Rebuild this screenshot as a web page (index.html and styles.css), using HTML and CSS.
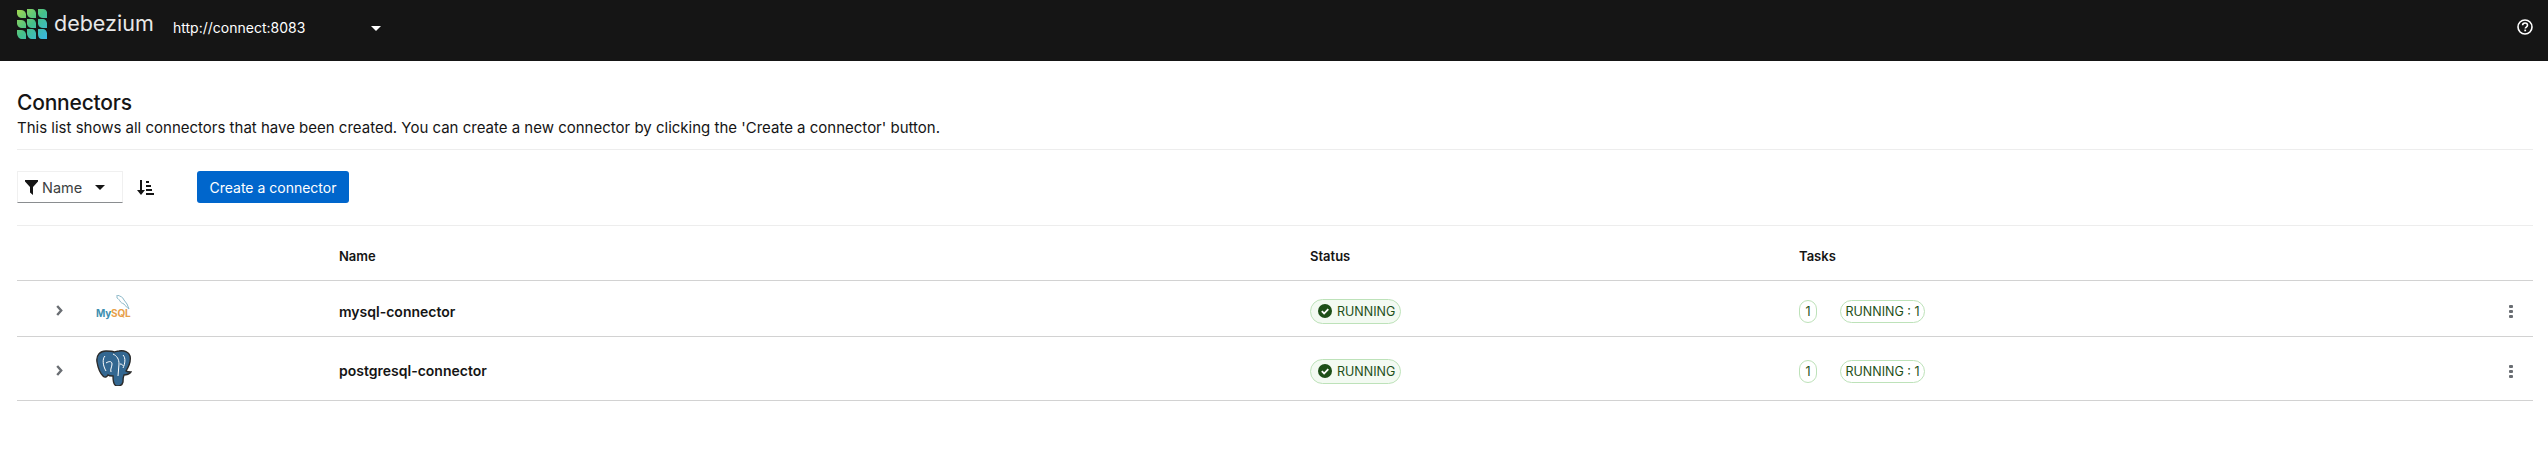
FILE: index.html
```html
<!DOCTYPE html>
<html lang="en">
<head>
<meta charset="utf-8">
<title>Debezium</title>
<link rel="stylesheet" href="styles.css">
</head>
<body>
<header class="topbar">
  <div class="brand">
    <svg class="brand-mark" width="30" height="30" viewBox="0 0 30 30">
      <defs>
        <linearGradient id="lg" x1="0" y1="0" x2="1" y2="1">
          <stop offset="0" stop-color="#a3d84e"/>
          <stop offset="0.5" stop-color="#45c08a"/>
          <stop offset="1" stop-color="#38b6e6"/>
        </linearGradient>
      </defs>
      <path fill="url(#lg)" d="M0 1h4q4 0 5 4v4H5Q1 9 0 5zM10 0h5q3 0 4 4v5h-4q-4 0-5-4zM21 0h5q3 0 4 3v6h-4q-4 0-5-4zM0 11h4q4 0 5 4v4H5q-4 0-5-4zM10 10h5q3 0 4 4v5h-4q-4 0-5-4zM21 10h5q3 0 4 4v5h-4q-4 0-5-4zM0 21h4q4 0 5 4v5H5q-4 0-5-5zM10 20h5q3 0 4 4v6h-4q-4 0-5-5zM21 20h5q3 0 4 4v6h-5q-4 0-4-5z"/>
    </svg>
    <span class="brand-name">debezium</span>
  </div>
  <div class="cluster">
    <span class="cluster-url">http://connect:8083</span>
    <span class="caret caret-white"></span>
  </div>
  <svg class="help" width="16" height="16" viewBox="0 0 16 16">
    <circle cx="8" cy="8" r="7" fill="none" stroke="#fff" stroke-width="1.6"/>
    <path d="M5.6 6.3C5.6 4.9 6.7 4 8 4s2.5.9 2.5 2.2c0 1.9-2.2 1.8-2.2 3.4" fill="none" stroke="#fff" stroke-width="1.6"/>
    <rect x="7.3" y="10.6" width="1.8" height="1.7" fill="#fff"/>
  </svg>
</header>

<main class="page">
  <section class="intro">
    <h1 class="title">Connectors</h1>
    <p class="desc">This list shows all connectors that have been created. You can create a new connector by clicking the 'Create a connector' button.</p>
  </section>

  <section class="toolbar">
    <div class="filter">
      <svg class="funnel" width="13" height="15" viewBox="0 0 13 15"><path d="M0 0h13v1.4L8 7v8L5 12.6V7L0 1.4z" fill="#151515"/></svg>
      <span class="filter-label">Name</span>
      <span class="caret caret-dark"></span>
    </div>
    <svg class="sort" width="17" height="15" viewBox="0 0 17 15">
      <path d="M3 0h2v10h3l-4 5-4-5h3z" fill="#151515"/>
      <rect x="9" y="1" width="3" height="2" fill="#151515"/>
      <rect x="9" y="5" width="5" height="2" fill="#151515"/>
      <rect x="9" y="9" width="6" height="2" fill="#151515"/>
      <rect x="9" y="13" width="8" height="2" fill="#151515"/>
    </svg>
    <button class="primary" type="button">Create a connector</button>
  </section>

  <div class="table">
    <div class="row head">
      <span></span><span></span>
      <span>Name</span><span>Status</span><span>Tasks</span><span></span>
    </div>

    <div class="row item item-short">
      <span class="chev"><svg width="7" height="11" viewBox="0 0 7 11"><path d="M1.2 1l4 4.5-4 4.5" fill="none" stroke="#6a6e73" stroke-width="2.4"/></svg></span>
      <span class="logo">
        <svg width="38" height="25" viewBox="0 0 38 25">
          <path d="M21 0c3 1 6 2 7 5l3 4 2 5c-2-2-4-3-5-5-2-1-3-1-4-3-1-1-1-2-3-3z" fill="none" stroke="#8db9c9" stroke-width="1"/>
          <text class="mark" x="0" y="22"><tspan class="my">My</tspan><tspan class="sql">SQL</tspan></text>
        </svg>
      </span>
      <span class="name">mysql-connector</span>
      <span class="status"><span class="pill pill-fill">
        <svg class="check" width="14" height="14" viewBox="0 0 14 14"><circle cx="7" cy="7" r="7" fill="#1e4f18"/><path d="M3.8 7.2l2.3 2.3 4.2-4.4" fill="none" stroke="#fff" stroke-width="1.8"/></svg>
        RUNNING</span></span>
      <span class="tasks"><span class="pill pill-line pill-count">1</span><span class="pill pill-line">RUNNING : 1</span></span>
      <span class="kebab"><i></i><i></i><i></i></span>
    </div>

    <div class="row item item-tall">
      <span class="chev"><svg width="7" height="11" viewBox="0 0 7 11"><path d="M1.2 1l4 4.5-4 4.5" fill="none" stroke="#6a6e73" stroke-width="2.4"/></svg></span>
      <span class="logo">
        <svg width="36" height="36" viewBox="0 0 36 36">
          <path d="M10 1C4 1 0 5 1 12c1 6 3 11 6 14 2 2 4 1 5-1 1 1 3 1 5 1 0 3 0 7 2 9 3 2 7 1 8-3 0-2 0-5 1-7 2 0 6-1 7-3-2 0-4 0-5-1 3-5 5-11 4-15-1-4-6-6-11-5-2 0-4 1-5 1-2-1-5-1-8-1z" fill="#336791" stroke="#2b2b2b" stroke-width="1.4"/>
          <path d="M9 6c-3 3-2 10 1 15M10 13c3-2 6-2 6 1 0 3-2 5-1 8M17 4c4 2 6 5 6 10 0 4-1 8-1 12M27 5c3 3 2 9 0 13M24 14c2 0 3 1 3 2" fill="none" stroke="#fff" stroke-width="1"/>
        </svg>
      </span>
      <span class="name">postgresql-connector</span>
      <span class="status"><span class="pill pill-fill">
        <svg class="check" width="14" height="14" viewBox="0 0 14 14"><circle cx="7" cy="7" r="7" fill="#1e4f18"/><path d="M3.8 7.2l2.3 2.3 4.2-4.4" fill="none" stroke="#fff" stroke-width="1.8"/></svg>
        RUNNING</span></span>
      <span class="tasks"><span class="pill pill-line pill-count">1</span><span class="pill pill-line">RUNNING : 1</span></span>
      <span class="kebab"><i></i><i></i><i></i></span>
    </div>
  </div>
</main>
</body>
</html>
```

FILE: styles.css
```css
* { box-sizing: border-box; }
html, body { margin: 0; padding: 0; }
body {
  background: #fff;
  color: #151515;
  font-family: Inter, "Liberation Sans", sans-serif;
  height: 455px;
  overflow: hidden;
}
.topbar {
  height: 61px;
  background: #151515;
  color: #fff;
  display: flex;
  align-items: flex-start;
  padding: 9px 15px 0 17px;
}
.brand { display: flex; align-items: center; gap: 7px; width: 156px; }
.brand-name {
  font-size: 21.5px;
  color: #e8e8e8;
  line-height: 30px;
  margin-top: -3px;
}
.cluster {
  display: flex;
  align-items: center;
  width: 208px;
  height: 38px;
  justify-content: space-between;
}
.cluster-url { font-size: 14px; line-height: 20px; }
.caret { display: block; width: 0; height: 0; border-style: solid; border-color: transparent; border-width: 5px 5.5px 0; }
.caret-white { border-top-color: #fff; }
.caret-dark { border-top-color: #151515; }
.help { margin-left: auto; margin-top: 10px; }
.page { padding: 0 15px 0 17px; }
.intro {
  height: 89px;
  padding-top: 28px;
  border-bottom: 1px solid #ededed;
}
.title { font-size: 21px; font-weight: 500; line-height: 28px; margin: 0; letter-spacing: -0.2px; }
.desc { font-size: 15px; line-height: 22px; margin: 0; }
.toolbar {
  height: 76px;
  display: flex;
  align-items: center;
  padding-bottom: 1px;
  border-bottom: 1px solid #ededed;
}
.filter {
  width: 106px;
  height: 32px;
  display: flex;
  align-items: center;
  padding-left: 7px;
  border: 1px solid #f0f0f0;
  border-bottom-color: #8a8d90;
}
.filter-label { font-size: 14.5px; margin-left: 4px; color: #3c3f42; }
.filter .caret { margin-left: 13px; }
.sort { margin-left: 14px; }
.primary {
  margin-left: 43px;
  width: 152px;
  height: 32px;
  background: #06c;
  color: #fff;
  border: 0;
  border-radius: 3px;
  font: 400 14px Inter, sans-serif;
  padding: 0;
}
.row {
  display: grid;
  grid-template-columns: 79px 243px 971px 489px 1fr 34px;
  align-items: center;
  border-bottom: 1px solid #d2d2d2;
}
.head { height: 55px; font-size: 13px; font-weight: 600; padding-top: 5px; }
.item-short { height: 56px; }
.item-tall { height: 64px; }
.chev { padding-left: 39px; display: flex; margin-top: 3px; }
.logo { display: flex; }
.item-short .logo { margin-top: -2px; }
.item-tall .logo { margin-top: -1px; }
.name { font-size: 14px; font-weight: 600; padding-top: 5px; }
.item-tall .name { padding-top: 4px; }
.kebab { padding-top: 5px; }
.status, .tasks { padding-top: 5px; }
.pill {
  display: inline-flex;
  align-items: center;
  gap: 5px;
  height: 25px;
  padding: 0 8px 0 7px;
  border: 1px solid #bde2b9;
  border-radius: 13px;
  font-size: 12.5px;
  color: #1e4f18;
}
.pill-fill { background: #f3faf2; width: 91px; }
.pill-line { background: #fff; height: 23px; width: 85px; justify-content: center; padding: 0; }
.pill-count { width: 18px; margin-right: 23px; }
.check { flex: none; }
.tasks { display: flex; align-items: center; }
.kebab { display: flex; flex-direction: column; align-items: center; gap: 2px; width: 4px; justify-self: start; margin-left: 10px; }
.kebab i { display: block; width: 4px; height: 3px; background: #6a6e73; border-radius: 1px; }
.mark { font-size: 10px; font-weight: 700; letter-spacing: -0.2px; }
.my { fill: #3e8fb0; }
.sql { fill: #e8a04a; }
```
